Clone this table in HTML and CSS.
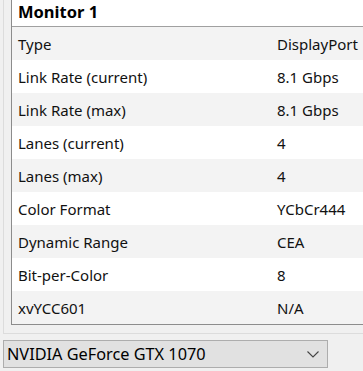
FILE: index.html
```html
<!DOCTYPE html>
<html>
<head>
<meta charset="utf-8">
<link rel="stylesheet" href="styles.css">
</head>
<body>
<div class="group">
  <div class="panel">
    <div class="header">Monitor 1</div>
    <div class="row alt"><span class="label">Type</span><span class="value">DisplayPort</span></div>
    <div class="row"><span class="label">Link Rate (current)</span><span class="value">8.1 Gbps</span></div>
    <div class="row alt"><span class="label">Link Rate (max)</span><span class="value">8.1 Gbps</span></div>
    <div class="row"><span class="label">Lanes (current)</span><span class="value">4</span></div>
    <div class="row alt"><span class="label">Lanes (max)</span><span class="value">4</span></div>
    <div class="row"><span class="label">Color Format</span><span class="value">YCbCr444</span></div>
    <div class="row alt"><span class="label">Dynamic Range</span><span class="value">CEA</span></div>
    <div class="row"><span class="label">Bit-per-Color</span><span class="value">8</span></div>
    <div class="row alt"><span class="label">xvYCC601</span><span class="value">N/A</span></div>
  </div>
</div>
<div class="select">
  <span class="select-text">NVIDIA GeForce GTX 1070</span>
  <svg class="chevron" width="12" height="7" viewBox="0 0 12 7"><path d="M0.5 0.5 L6 6 L11.5 0.5" fill="none" stroke="#444" stroke-width="1.1"/></svg>
</div>
</body>
</html>
```
FILE: styles.css
```css
html, body {
  margin: 0;
  padding: 0;
}
body {
  width: 363px;
  height: 371px;
  overflow: hidden;
  background: #f0f0f0;
  font-family: "Noto Sans", "Open Sans", sans-serif;
  color: #111;
}
.group {
  margin-left: 3px;
  border-left: 1px solid #dcdcdc;
  border-bottom: 1px solid #dcdcdc;
  padding: 0 0 8px 7px;
}
.panel {
  background: #fff;
  border-left: 1px solid #8c8c8c;
  border-bottom: 1px solid #8c8c8c;
}
.header {
  height: 26px;
  border-bottom: 1px solid #a0a0a0;
  padding-left: 6px;
  font-weight: bold;
  font-size: 16.5px;
  line-height: 24px;
  color: #000;
}
.row {
  display: grid;
  grid-template-columns: 265px 1fr;
  height: 33px;
  align-items: center;
  font-size: 15px;
  white-space: nowrap;
  overflow: hidden;
}
.row.alt {
  background: #f3f3f3;
}
.label {
  padding-left: 6px;
}
.select {
  margin: 6px 0 0 3px;
  height: 26px;
  border: 1px solid #adadad;
  background: #e1e1e1;
  display: flex;
  align-items: center;
  justify-content: space-between;
  padding: 0 8px 0 3px;
  width: 312px;
}
.select-text {
  font-size: 16.3px;
  color: #000;
}
.chevron {
  display: block;
}
```
